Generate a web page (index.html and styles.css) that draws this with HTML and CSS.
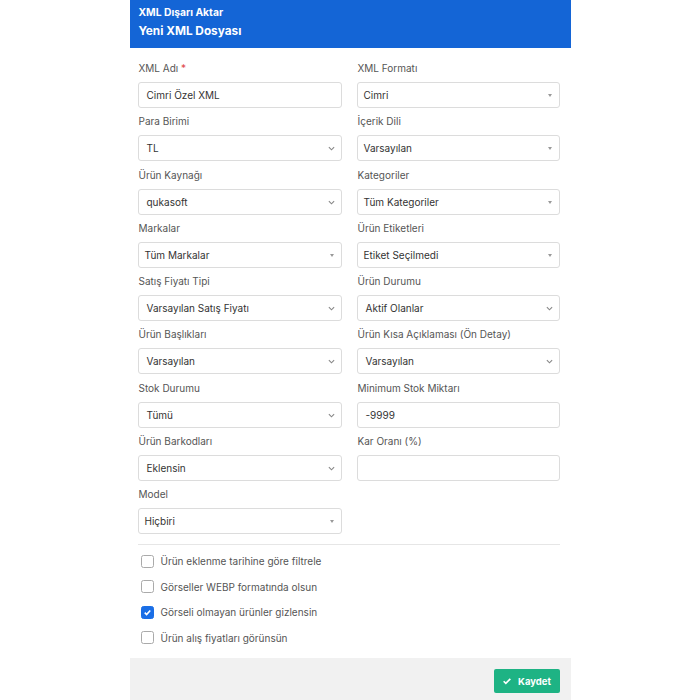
FILE: index.html
```html
<!DOCTYPE html>
<html lang="tr">
<head>
<meta charset="utf-8">
<title>XML Dışarı Aktar</title>
<link rel="stylesheet" href="styles.css">
</head>
<body>
<div class="modal">
  <div class="modal-head">
    <div class="head-small">XML Dışarı Aktar</div>
    <div class="head-title">Yeni XML Dosyası</div>
  </div>

  <div class="modal-body">
    <div class="form-grid">
      <div class="group">
        <label>XML Adı <span class="req">*</span></label>
        <div class="field">Cimri Özel XML</div>
      </div>
      <div class="group">
        <label>XML Formatı</label>
        <div class="field s2">Cimri<span class="tri"></span></div>
      </div>

      <div class="group">
        <label>Para Birimi</label>
        <div class="field sel">TL<svg class="chev" viewBox="0 0 8 5"><path d="M1 1l3 3 3-3"/></svg></div>
      </div>
      <div class="group">
        <label>İçerik Dili</label>
        <div class="field s2">Varsayılan<span class="tri"></span></div>
      </div>

      <div class="group">
        <label>Ürün Kaynağı</label>
        <div class="field sel">qukasoft<svg class="chev" viewBox="0 0 8 5"><path d="M1 1l3 3 3-3"/></svg></div>
      </div>
      <div class="group">
        <label>Kategoriler</label>
        <div class="field s2">Tüm Kategoriler<span class="tri"></span></div>
      </div>

      <div class="group">
        <label>Markalar</label>
        <div class="field s2">Tüm Markalar<span class="tri"></span></div>
      </div>
      <div class="group">
        <label>Ürün Etiketleri</label>
        <div class="field s2">Etiket Seçilmedi<span class="tri"></span></div>
      </div>

      <div class="group">
        <label>Satış Fiyatı Tipi</label>
        <div class="field sel">Varsayılan Satış Fiyatı<svg class="chev" viewBox="0 0 8 5"><path d="M1 1l3 3 3-3"/></svg></div>
      </div>
      <div class="group">
        <label>Ürün Durumu</label>
        <div class="field sel">Aktif Olanlar<svg class="chev" viewBox="0 0 8 5"><path d="M1 1l3 3 3-3"/></svg></div>
      </div>

      <div class="group">
        <label>Ürün Başlıkları</label>
        <div class="field sel">Varsayılan<svg class="chev" viewBox="0 0 8 5"><path d="M1 1l3 3 3-3"/></svg></div>
      </div>
      <div class="group">
        <label>Ürün Kısa Açıklaması (Ön Detay)</label>
        <div class="field sel">Varsayılan<svg class="chev" viewBox="0 0 8 5"><path d="M1 1l3 3 3-3"/></svg></div>
      </div>

      <div class="group">
        <label>Stok Durumu</label>
        <div class="field sel">Tümü<svg class="chev" viewBox="0 0 8 5"><path d="M1 1l3 3 3-3"/></svg></div>
      </div>
      <div class="group">
        <label>Minimum Stok Miktarı</label>
        <div class="field">-9999</div>
      </div>

      <div class="group">
        <label>Ürün Barkodları</label>
        <div class="field sel">Eklensin<svg class="chev" viewBox="0 0 8 5"><path d="M1 1l3 3 3-3"/></svg></div>
      </div>
      <div class="group">
        <label>Kar Oranı (%)</label>
        <div class="field"></div>
      </div>

      <div class="group">
        <label>Model</label>
        <div class="field s2">Hiçbiri<span class="tri"></span></div>
      </div>
    </div>

    <div class="divider"></div>

    <div class="checks">
      <div class="check"><span class="box"></span>Ürün eklenme tarihine göre filtrele</div>
      <div class="check"><span class="box"></span>Görseller WEBP formatında olsun</div>
      <div class="check"><span class="box on"><svg viewBox="0 0 12 12"><path d="M3 6.2l2 2 4-4.4"/></svg></span>Görseli olmayan ürünler gizlensin</div>
      <div class="check"><span class="box"></span>Ürün alış fiyatları görünsün</div>
    </div>
  </div>

  <div class="modal-foot">
    <button class="btn-save"><svg viewBox="0 0 12 12"><path d="M2 6.3l2.6 2.5L10 3.4"/></svg>Kaydet</button>
  </div>
</div>
</body>
</html>
```

FILE: styles.css
```css
body { margin:0; background:#fff; font-family:Inter, "Noto Sans", sans-serif; }
.modal { width:441px; margin:0 auto; background:#fff; }

.modal-head { background:#1465d6; height:48px; padding:0 9px; color:#fff; box-sizing:border-box; }
.head-small { font-size:10.3px; font-weight:700; padding-top:5px; line-height:14px; }
.head-title { font-size:11.8px; font-weight:700; line-height:16px; margin-top:4px; }

.modal-body { padding:14px 11px 7px 8px; }
.form-grid { display:grid; grid-template-columns:204px 203px; column-gap:15px; row-gap:7.3px; }
.group label { display:block; font-size:10px; line-height:13px; color:#555; margin:0 0 7px 1px; }
.req { color:#e04848; }

.field { position:relative; height:26px; box-sizing:border-box; border:1px solid #dcdcdc; border-radius:3px; background:#fff; padding:0 8px; font-size:10px; line-height:24px; color:#333; }
.field.s2 { padding-left:6px; }
.tri { position:absolute; right:7px; top:11px; width:0; height:0; border-left:2.5px solid transparent; border-right:2.5px solid transparent; border-top:3px solid #999; }
.chev { position:absolute; right:6px; top:10px; width:7px; height:5px; fill:none; stroke:#888; stroke-width:1.3; }

.divider { height:1px; background:#e6e6e6; margin:10px 0 3px; }

.checks { padding-left:3px; }
.check { display:flex; align-items:center; height:25.5px; font-size:10px; color:#555; }
.box { width:11px; height:11px; border:1px solid #aaa; border-radius:2.5px; margin-right:7px; display:inline-flex; align-items:center; justify-content:center; }
.box.on { background:#1a6ee6; border-color:#1a6ee6; }
.box svg { width:11px; height:11px; fill:none; stroke:#fff; stroke-width:1.8; }

.modal-foot { background:#f1f1f1; height:44px; margin-top:1px; display:flex; justify-content:flex-end; padding:11px 11px 0 0; box-sizing:border-box; }
.btn-save { width:66px; height:24px; border:0; border-radius:2px; background:#1eb384; color:#fff; font-family:Inter, "Noto Sans", sans-serif; font-size:9.5px; font-weight:700; display:flex; align-items:center; justify-content:center; gap:6px; padding:0; }
.btn-save svg { width:10px; height:10px; fill:none; stroke:#fff; stroke-width:2; }
```
